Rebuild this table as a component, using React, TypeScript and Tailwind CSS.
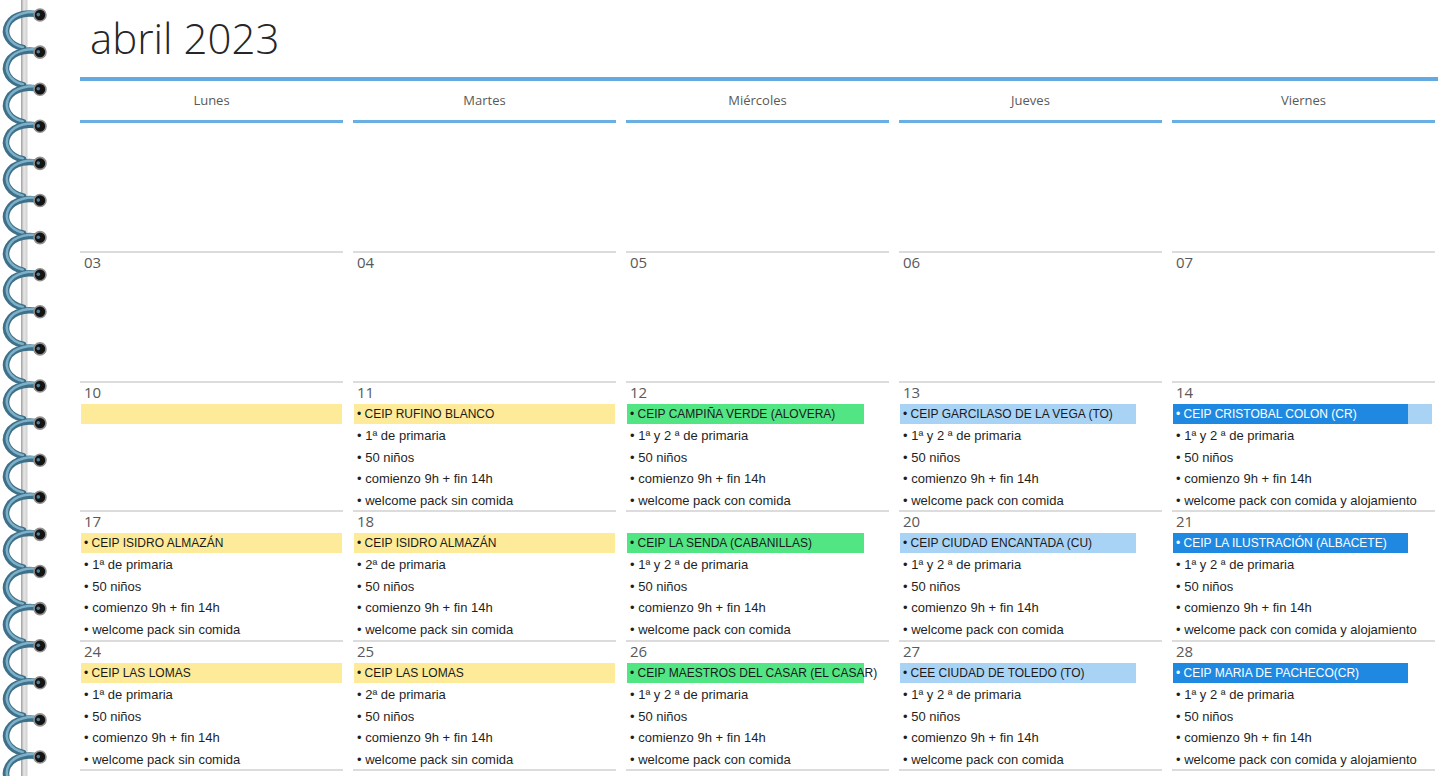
import React from "react";

// ============================================================
// Planner page: abril 2023, weekdays only, spiral binding left
// ============================================================

type Tone = "yellow" | "green" | "sky" | "blue";

interface Day {
  num?: string;
  tone?: Tone;
  title?: string;
  lines?: string[];
  tail?: boolean; // light blue extension on the bar
}

const DAYS = ["Lunes", "Martes", "Miércoles", "Jueves", "Viernes"];

const sin = (grade: string) => [`${grade} de primaria`, "50 niños", "comienzo 9h + fin 14h", "welcome pack sin comida"];
const con = ["1ª y 2 ª de primaria", "50 niños", "comienzo 9h + fin 14h", "welcome pack con comida"];
const aloj = ["1ª y 2 ª de primaria", "50 niños", "comienzo 9h + fin 14h", "welcome pack con comida y alojamiento"];

const WEEKS: Day[][] = [
  [{}, {}, {}, {}, {}],
  [{ num: "03" }, { num: "04" }, { num: "05" }, { num: "06" }, { num: "07" }],
  [
    { num: "10", tone: "yellow" },
    { num: "11", tone: "yellow", title: "CEIP RUFINO BLANCO", lines: sin("1ª") },
    { num: "12", tone: "green", title: "CEIP CAMPIÑA VERDE (ALOVERA)", lines: con },
    { num: "13", tone: "sky", title: "CEIP GARCILASO DE LA VEGA (TO)", lines: con },
    { num: "14", tone: "blue", title: "CEIP CRISTOBAL COLON (CR)", lines: aloj, tail: true },
  ],
  [
    { num: "17", tone: "yellow", title: "CEIP ISIDRO ALMAZÁN", lines: sin("1ª") },
    { num: "18", tone: "yellow", title: "CEIP ISIDRO ALMAZÁN", lines: sin("2ª") },
    { num: "", tone: "green", title: "CEIP LA SENDA (CABANILLAS)", lines: con },
    { num: "20", tone: "sky", title: "CEIP CIUDAD ENCANTADA (CU)", lines: con },
    { num: "21", tone: "blue", title: "CEIP LA ILUSTRACIÓN (ALBACETE)", lines: aloj },
  ],
  [
    { num: "24", tone: "yellow", title: "CEIP LAS LOMAS", lines: sin("1ª") },
    { num: "25", tone: "yellow", title: "CEIP LAS LOMAS", lines: sin("2ª") },
    { num: "26", tone: "green", title: "CEIP MAESTROS DEL CASAR (EL CASAR)", lines: con },
    { num: "27", tone: "sky", title: "CEE CIUDAD DE TOLEDO (TO)", lines: con },
    { num: "28", tone: "blue", title: "CEIP MARIA DE PACHECO(CR)", lines: aloj },
  ],
  [{}, {}, {}, {}, {}],
];

const ROW_H = ["h-[128px]", "h-[130px]", "h-[129px]", "h-[130px]", "h-[129px]", "h-[40px]"];

const BAR: Record<Tone, string> = {
  yellow: "w-[261px] bg-[#fdeb99] text-[#1a1a1a]",
  green: "w-[237px] bg-[#52e584] text-[#1a1a1a]",
  sky: "w-[236px] bg-[#a9d3f5] text-[#1a1a1a]",
  blue: "w-[235px] bg-[#1f89e2] text-white",
};

function Spiral() {
  const coils = Array.from({ length: 21 }, (_, i) => 15 + i * 37.1);
  return (
    <svg width="60" height="776" viewBox="0 0 60 776" className="block">
      <defs>
        <linearGradient id="edge" x1="0" x2="1" y1="0" y2="0">
          <stop offset="0" stopColor="#9d9d9d" />
          <stop offset="0.45" stopColor="#e6e6e6" />
          <stop offset="1" stopColor="#cfcfcf" />
        </linearGradient>
      </defs>
      <rect x="21" y="0" width="6.5" height="776" fill="url(#edge)" />
      {coils.map((y) => (
        <g key={y}>
          <path
            d={`M40 ${y} C30 ${y - 3} 14 ${y - 2} 8 ${y + 9} C2.5 ${y + 19} 9 ${y + 30} 23 ${y + 33}`}
            fill="none"
            stroke="#3e7089"
            strokeWidth="6.5"
            strokeLinecap="round"
          />
          <path
            d={`M38 ${y - 1.5} C30 ${y - 3} 14 ${y - 2} 8 ${y + 9} C2.5 ${y + 19} 9 ${y + 30} 22 ${y + 33}`}
            fill="none"
            stroke="#7db0c9"
            strokeWidth="2.5"
            strokeLinecap="round"
            transform="translate(0.8 -0.8)"
          />
          <circle cx="40" cy={y} r="6" fill="#141414" stroke="#8f8f8f" strokeWidth="1.6" />
          <circle cx="38.3" cy={y - 0.4} r="1.8" fill="#4f819b" />
        </g>
      ))}
    </svg>
  );
}

function Cell({ day, first }: { day: Day; first: boolean }) {
  return (
    <div className={first ? "" : "border-t-2 border-[#dcdcdc]"}>
      {day.num !== undefined && (
        <div className="h-[18px] pl-[4px] text-[15px] leading-[18px] text-[#595959] font-['Open_Sans',sans-serif]">
          {day.num}
        </div>
      )}
      {day.tone && (
        <div className="mt-[3px] ml-[1px] flex h-[20px]">
          <div className={`${BAR[day.tone]} h-[20px] pl-[3px] text-[12px] leading-[20px] whitespace-nowrap`}>
            {day.title ? `• ${day.title}` : ""}
          </div>
          {day.tail && <div className="h-[20px] w-[24px] bg-[#a9d3f5]" />}
        </div>
      )}
      {day.lines && (
        <ul className="mt-[1px]">
          {day.lines.map((l) => (
            <li key={l} className="h-[21.5px] pl-[4px] text-[13px] leading-[21.5px] text-[#1f1f1f] whitespace-nowrap">
              • {l}
            </li>
          ))}
        </ul>
      )}
    </div>
  );
}

export default function App() {
  return (
    <div className="flex h-[776px] w-[1440px] overflow-hidden bg-white font-['Liberation_Sans',Arial,sans-serif]">
      <aside className="w-[80px] shrink-0">
        <Spiral />
      </aside>

      <main className="w-[1358px]">
        <h1 className="h-[77px] pl-[10px] pt-[17px] text-[42px] font-light leading-none text-[#262626] font-['Open_Sans',sans-serif]">
          abril 2023
        </h1>
        <div className="h-[4px] bg-[#64aae2]" />

        <div className="grid w-[1355px] grid-cols-5 gap-x-[10px]">
          {DAYS.map((d) => (
            <div
              key={d}
              className="flex h-[42px] items-center justify-center border-b-[3px] border-[#6aafe4] text-[13px] text-[#595959] font-['Open_Sans',sans-serif]"
            >
              {d}
            </div>
          ))}
        </div>

        {WEEKS.map((week, w) => (
          <div key={w} className={`grid w-[1355px] grid-cols-5 gap-x-[10px] ${ROW_H[w]}`}>
            {week.map((day, i) => (
              <Cell key={i} day={day} first={w === 0} />
            ))}
          </div>
        ))}
      </main>
    </div>
  );
}
